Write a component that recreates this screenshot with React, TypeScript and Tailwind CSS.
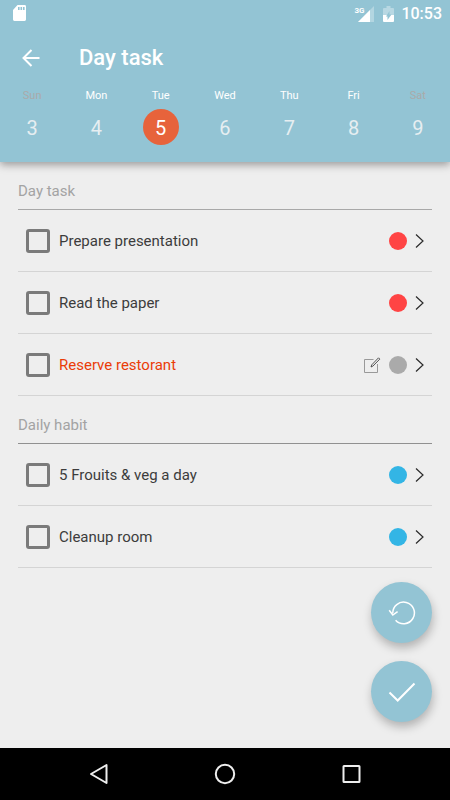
const days = [
  { name: "Sun", date: 3, weekend: true },
  { name: "Mon", date: 4 },
  { name: "Tue", date: 5, selected: true },
  { name: "Wed", date: 6 },
  { name: "Thu", date: 7 },
  { name: "Fri", date: 8 },
  { name: "Sat", date: 9, weekend: true },
];

type Task = {
  id: string;
  title: string;
  dotClass: string;
  highlighted?: boolean;
};

const dayTasks: Task[] = [
  { id: "presentation", title: "Prepare presentation", dotClass: "bg-[#ff4444]" },
  { id: "paper", title: "Read the paper", dotClass: "bg-[#ff4444]" },
  { id: "restorant", title: "Reserve restorant", dotClass: "bg-[#aaaaaa]", highlighted: true },
];

const dailyHabits: Task[] = [
  { id: "veg", title: "5 Frouits & veg a day", dotClass: "bg-[#33b5e5]" },
  { id: "cleanup", title: "Cleanup room", dotClass: "bg-[#33b5e5]" },
];

function StatusBar() {
  return (
    <div className="flex h-7 items-center pr-2 pl-3 text-white">
      <svg viewBox="0 0 15 18" aria-hidden="true" className="h-[18px] w-[15px]">
        <path
          fill="currentColor"
          fillRule="evenodd"
          d="M5.500 0h7.100A1.400 1.400 0 0 1 14 1.400v13.200a1.400 1.400 0 0 1-1.400 1.400H2.400A1.400 1.400 0 0 1 1 14.600V5zM6 2v3h1.600V2zM8.500 2v3h1.600V2zM11 2v3h1.600V2z"
        />
      </svg>
      <div className="ml-auto flex items-center">
        <div className="relative h-[17px] w-5">
          <svg viewBox="0 0 20 17" aria-hidden="true" className="h-[17px] w-5">
            <path d="M20 0v16H4z" fill="#fff" fillOpacity="0.3" />
            <path d="M16 4v12H4z" fill="currentColor" />
          </svg>
          <span className="absolute top-0 left-0 bg-[#93c4d4] pr-px text-[8px] leading-[9px] font-bold">3G</span>
        </div>
        <svg viewBox="0 0 11 17" aria-hidden="true" className="ml-[9px] h-[17px] w-[11px]">
          <path d="M3.500 0h4v2H10a1 1 0 0 1 1 1v6H0V3a1 1 0 0 1 1-1h2.500z" fill="#fff" fillOpacity="0.35" />
          <path d="M0 9h11v6a1 1 0 0 1-1 1H1a1 1 0 0 1-1-1z" fill="currentColor" />
          <path d="M8.500 8.500 4.500 14v-3.500H3L6.500 5v3.500z" fill="#93c4d4" />
        </svg>
        <span className="ml-[7px] text-base font-medium">10:53</span>
      </div>
    </div>
  );
}

function DayPicker() {
  return (
    <div className="grid grid-cols-7">
      {days.map((day) => (
        <button key={day.name} type="button" className="flex flex-col items-center">
          <span className={`text-[11px] leading-4 ${day.weekend ? "text-[#aaaaaa]" : "text-white"}`}>
            {day.name}
          </span>
          <span
            className={`mt-[5px] flex h-9 w-9 items-center justify-center rounded-full pt-px text-xl ${
              day.selected ? "bg-[#e7633b] text-white" : "text-[#e6eef1]"
            }`}
          >
            {day.date}
          </span>
        </button>
      ))}
    </div>
  );
}

function EditIcon() {
  return (
    <svg viewBox="0 0 18 18" aria-hidden="true" className="h-[18px] w-[18px]" fill="none">
      <path d="M10.500 3.500H1.500v13h13V8" stroke="#999" />
      <path d="m8 11 .8-2.200 6.700-7 1.300 1.300-6.900 7z" stroke="#444" strokeWidth="0.900" />
    </svg>
  );
}

function TaskRow({ task }: { task: Task }) {
  return (
    <li className="flex h-[62px] items-center border-b border-[#d4d4d4] pr-[7px] pl-2">
      <input
        id={task.id}
        type="checkbox"
        className="h-6 w-6 appearance-none rounded-[3px] border-3 border-[#7a7a7a] checked:bg-[#93c4d4]"
      />
      <label
        htmlFor={task.id}
        className={`ml-[9px] flex-1 text-[15px] leading-6 ${task.highlighted ? "text-[#ea3c08]" : "text-[#3c3c3c]"}`}
      >
        {task.title}
      </label>
      {task.highlighted && (
        <button type="button" aria-label={`Edit ${task.title}`} className="mr-2">
          <EditIcon />
        </button>
      )}
      <span className={`h-[18px] w-[18px] rounded-full ${task.dotClass}`} />
      <button type="button" aria-label={`Open ${task.title}`} className="ml-2">
        <svg viewBox="0 0 10 16" aria-hidden="true" className="h-4 w-[10px]" fill="none">
          <path d="m1 1.500 7 6.500-7 6.500" stroke="#2a2a2a" strokeWidth="1.200" />
        </svg>
      </button>
    </li>
  );
}

function TaskSection({ title, tasks, lineClass }: { title: string; tasks: Task[]; lineClass: string }) {
  return (
    <section>
      <h2 className={`flex h-12 items-end border-b pb-2 text-[15px] leading-5 text-[#a3a3a3] ${lineClass}`}>
        {title}
      </h2>
      <ul>
        {tasks.map((task) => (
          <TaskRow key={task.id} task={task} />
        ))}
      </ul>
    </section>
  );
}

function FloatingActions() {
  const buttonClass =
    "flex h-[61px] w-[61px] items-center justify-center rounded-full bg-[#93c4d4] text-white shadow-[1px_5px_10px_rgba(0,0,0,0.25)]";

  return (
    <div className="absolute right-[18px] bottom-[26px] flex flex-col gap-[18px]">
      <button type="button" aria-label="Undo" className={buttonClass}>
        <svg viewBox="0 0 28 28" aria-hidden="true" className="h-7 w-7" fill="none" stroke="currentColor" strokeWidth="1.500">
          <path d="M7.600 21.200A10.800 10.800 0 1 0 4.800 14.400" />
          <path d="m1.200 11.200 3.600 4.800 4.800-3.400" />
        </svg>
      </button>
      <button type="button" aria-label="Done" className={buttonClass}>
        <svg viewBox="0 0 28 28" aria-hidden="true" className="h-7 w-7" fill="none" stroke="currentColor" strokeWidth="2">
          <path d="m1.500 14.500 8.200 8L26.500 5.500" />
        </svg>
      </button>
    </div>
  );
}

function NavigationBar() {
  return (
    <nav className="flex h-[52px] items-center justify-center gap-[98px] bg-black text-[#eeeeee]">
      <button type="button" aria-label="Back">
        <svg viewBox="0 0 28 28" aria-hidden="true" className="h-7 w-7" fill="none" stroke="currentColor" strokeWidth="2">
          <path d="M21.500 5v18L6 14z" strokeLinejoin="round" />
        </svg>
      </button>
      <button type="button" aria-label="Home">
        <svg viewBox="0 0 28 28" aria-hidden="true" className="h-7 w-7" fill="none" stroke="currentColor" strokeWidth="2">
          <circle cx="14" cy="14" r="9.200" />
        </svg>
      </button>
      <button type="button" aria-label="Recent apps">
        <svg viewBox="0 0 28 28" aria-hidden="true" className="h-7 w-7" fill="none" stroke="currentColor" strokeWidth="2">
          <rect x="6.500" y="6" width="16" height="16" rx="0.500" />
        </svg>
      </button>
    </nav>
  );
}

export default function App() {
  return (
    <div className="flex min-h-screen flex-col bg-[#eeeeee] font-[Roboto,sans-serif]">
      <header className="bg-[#93c4d4] pb-[17px] shadow-[0_3px_8px_rgba(0,0,0,0.35)]">
        <StatusBar />
        <div className="flex h-[60px] items-center pb-px pl-5 text-white">
          <button type="button" aria-label="Back">
            <svg viewBox="0 0 22 22" aria-hidden="true" className="h-[22px] w-[22px]" fill="none" stroke="currentColor" strokeWidth="2">
              <path d="M19.500 11H3.500M11.500 3l-8 8 8 8" />
            </svg>
          </button>
          <h1 className="ml-[37px] text-[22px] font-medium">Day task</h1>
        </div>
        <DayPicker />
      </header>

      <main className="relative flex-1 px-[18px]">
        <TaskSection title="Day task" tasks={dayTasks} lineClass="border-[#a8a8a8]" />
        <TaskSection title="Daily habit" tasks={dailyHabits} lineClass="border-[#909090]" />
        <FloatingActions />
      </main>

      <NavigationBar />
    </div>
  );
}
